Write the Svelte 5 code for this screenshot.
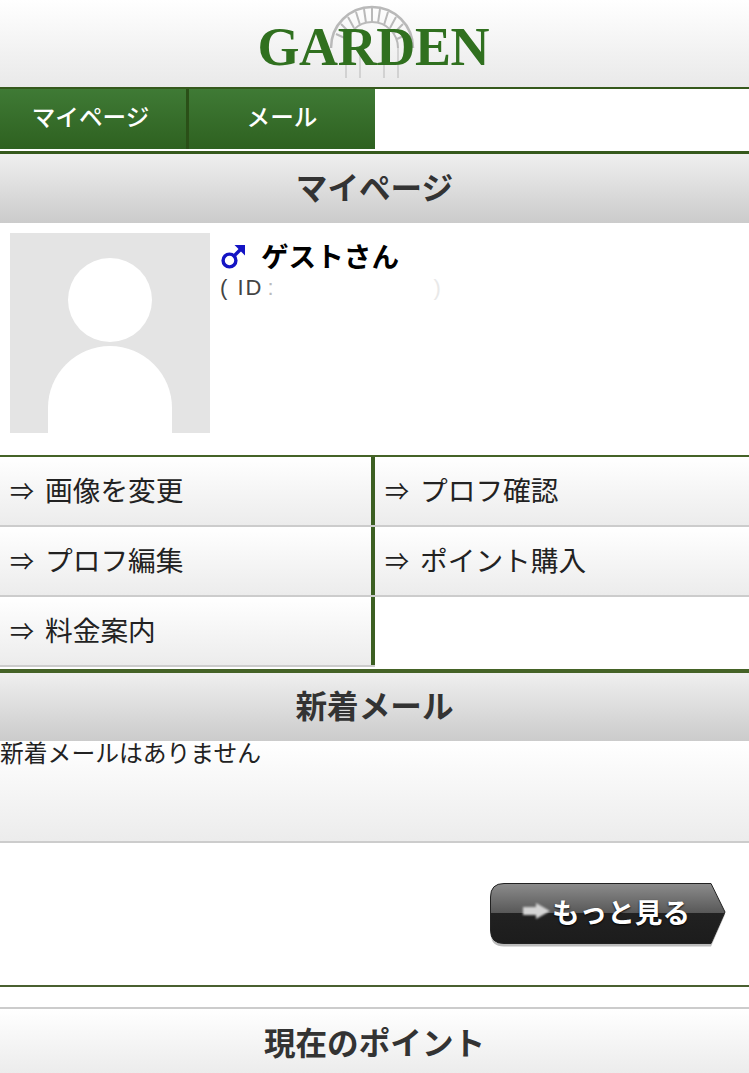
<script>
  const tabs = ["マイページ", "メール"];
  const links = ["画像を変更", "プロフ確認", "プロフ編集", "ポイント購入", "料金案内"];
</script>

<div class="page">
  <header class="logo-bar">
    <div class="logo">
      <svg class="wheel" viewBox="0 0 100 90" width="100" height="90" aria-hidden="true">
        <g fill="none" stroke="#b9b9b9">
          <path d="M9 58 A41 41 0 0 1 91 58" stroke-width="2.5" />
          <path d="M24 58 A26 26 0 0 1 76 58" stroke-width="2" />
          <path d="M50 18V32M42 19 44 33M58 19 56 33M34 22 38 35M66 22 62 35M26 27 32 38M74 27 68 38M19 34 28 43M81 34 72 43M14 44 25 49M86 44 75 49" stroke-width="2" />
          <path d="M24 58V88M38 58V88M62 58V88M76 58V88" stroke-width="1.5" opacity="0.7" />
        </g>
      </svg>
      <span class="logo-text">GARDEN</span>
    </div>
  </header>

  <nav class="tabs">
    {#each tabs as tab}
      <div class="tab">{tab}</div>
    {/each}
  </nav>

  <h2 class="section first">マイページ</h2>

  <section class="profile">
    <div class="avatar">
      <svg viewBox="0 0 200 200" width="200" height="200" aria-hidden="true">
        <circle cx="100" cy="67" r="42" fill="#fff" />
        <path d="M38 200V175A62 62 0 0 1 100 113H100A62 62 0 0 1 162 175V200Z" fill="#fff" />
      </svg>
    </div>
    <div class="who">
      <div class="name">
        <svg class="male" viewBox="0 0 26 26" width="26" height="26" aria-hidden="true">
          <circle cx="9.5" cy="16.5" r="6.4" fill="none" stroke="#1414c4" stroke-width="3.4" />
          <path d="M14 12 21 5" fill="none" stroke="#1414c4" stroke-width="3.4" />
          <path d="M14.5 1H25V11.5L21.5 8 18 4.5Z" fill="#1414c4" />
        </svg>
        <span>ゲストさん</span>
      </div>
      <div class="id">( ID <span class="colon">:</span><span class="masked"></span><span class="close">)</span></div>
    </div>
  </section>

  <div class="links">
    {#each links as link, i}
      <a class="link" class:left={i % 2 === 0} href="#top"><span class="arrow">⇒</span>{link}</a>
    {/each}
    <div class="link-empty"></div>
  </div>

  <h2 class="section second">新着メール</h2>

  <div class="mail">新着メールはありません</div>

  <div class="more-row">
    <div class="more">
      <svg class="more-bg" viewBox="0 0 237 64" width="237" height="64" aria-hidden="true">
        <defs>
          <linearGradient id="gloss" x1="0" y1="0" x2="0" y2="1">
            <stop offset="0" stop-color="#8c8c8c" />
            <stop offset="0.5" stop-color="#575757" />
            <stop offset="0.5" stop-color="#212121" />
            <stop offset="1" stop-color="#1c1c1c" />
          </linearGradient>
        </defs>
        <path d="M14 2.5H221L235 30 221 62H14Q1 62 1 50V14Q1 2.5 14 2.5Z" fill="#bbb" transform="translate(0 1.6)" />
        <path d="M14 0.5H221L235 29 221 60.5H14Q0.5 60.5 0.5 47V14Q0.5 0.5 14 0.5Z" fill="url(#gloss)" stroke="#222" />
      </svg>
      <svg class="more-arrow" viewBox="0 0 27 16" width="27" height="16" aria-hidden="true">
        <path d="M0 4H13V0L27 8 13 16V12H0Z" fill="#d4d4d4" />
      </svg>
      <span class="more-label">もっと見る</span>
    </div>
  </div>

  <h2 class="section third">現在のポイント</h2>
</div>

<style>
  :global(body) {
    background: #fff;
    font-family: "Noto Sans CJK JP", "Liberation Sans", sans-serif;
  }

  .page {
    width: 749px;
    height: 1073px;
    overflow: hidden;
    background: #fff;
  }

  .logo-bar {
    display: flex;
    justify-content: center;
    height: 87px;
    border-bottom: 2px solid #35591c;
    background: linear-gradient(#fff, #e9e9e9);
    overflow: hidden;
  }

  .logo {
    position: relative;
    width: 232px;
    height: 87px;
  }

  .wheel {
    position: absolute;
    left: 63px;
    top: -10px;
    filter: blur(0.6px);
  }

  .logo-text {
    position: absolute;
    left: -1px;
    top: 15px;
    font-family: "Liberation Serif", serif;
    font-size: 54px;
    line-height: 64px;
    font-weight: 700;
    letter-spacing: -0.4px;
    color: #30701f;
    filter: blur(0.7px);
  }

  .tabs {
    display: flex;
    height: 60px;
  }

  .tab {
    width: 186px;
    display: flex;
    align-items: center;
    justify-content: center;
    background: linear-gradient(#3f7a35, #2e6120);
    color: #fff;
    font-size: 23.6px;
    font-weight: 500;
    padding: 0 5px 7px 0;
    box-sizing: border-box;
  }

  .tab + .tab {
    border-left: 3px solid #2a4f17;
    width: 189px;
    padding-right: 0;
  }

  .section {
    margin: 0;
    display: flex;
    align-items: center;
    justify-content: center;
    box-sizing: border-box;
    background: linear-gradient(#efefef, #cbcbcb);
    color: #333;
    font-size: 31.6px;
    font-weight: 700;
    padding-bottom: 6px;
  }

  .first {
    height: 72px;
    margin-top: 2px;
    border-top: 3px solid #35591c;
  }

  .second {
    height: 72px;
    border-top: 4px solid #456327;
    margin-top: 2px;
  }

  .third {
    height: 66px;
    margin-top: 20px;
    border-top: 2px solid #ccc;
    background: linear-gradient(#fff, #ececec);
    padding-bottom: 0;
  }

  .profile {
    display: flex;
    gap: 10px;
    padding: 10px 10px 22px;
  }

  .avatar {
    width: 200px;
    height: 200px;
    background: #e4e4e4;
  }

  .avatar svg {
    display: block;
  }

  .name {
    display: flex;
    align-items: center;
    gap: 15px;
    height: 44px;
    font-size: 27.6px;
    font-weight: 700;
    color: #000;
  }

  .male {
    margin-top: 4px;
  }

  .id {
    display: flex;
    align-items: center;
    margin-top: 2px;
    font-family: "Liberation Sans", sans-serif;
    font-size: 22px;
    letter-spacing: 2px;
    color: #444;
    height: 18px;
  }

  .id .colon {
    color: #bbb;
    margin-left: 4px;
  }

  .masked {
    width: 158px;
  }

  .close {
    color: #e9e9e9;
  }

  .links {
    display: grid;
    grid-template-columns: 375px 374px;
    border-top: 2px solid #456327;
  }

  .link {
    display: flex;
    align-items: center;
    height: 70px;
    box-sizing: border-box;
    padding: 0 0 4px 10px;
    border-bottom: 2px solid #ccc;
    background: linear-gradient(#fff, #ececec);
    color: #222;
    font-size: 27.7px;
    text-decoration: none;
  }

  .link.left {
    box-shadow: inset -4px 0 0 #3c5f22;
  }

  .arrow {
    width: 35px;
    font-size: 24px;
  }

  .link-empty {
    height: 70px;
  }

  .mail {
    height: 100px;
    border-bottom: 2px solid #ccc;
    background: linear-gradient(#fff, #ececec);
    color: #222;
    font-size: 23.8px;
    line-height: 22px;
  }

  .more-row {
    display: flex;
    justify-content: flex-end;
    padding: 40px 23px 40px 0;
    height: 144px;
    box-sizing: border-box;
    border-bottom: 2px solid #4a6030;
  }

  .more {
    position: relative;
    display: flex;
    align-items: center;
    width: 236px;
    height: 62px;
    padding-left: 33px;
    box-sizing: border-box;
    gap: 2px;
  }

  .more-bg {
    position: absolute;
    left: 0;
    top: 0;
  }

  .more-arrow {
    position: relative;
    filter: blur(1px);
    margin-top: -6px;
  }

  .more-label {
    position: relative;
    color: #fff;
    font-size: 27.6px;
    font-weight: 700;
    margin-top: -6px;
    text-shadow: 0 1px 2px #000;
  }
</style>
